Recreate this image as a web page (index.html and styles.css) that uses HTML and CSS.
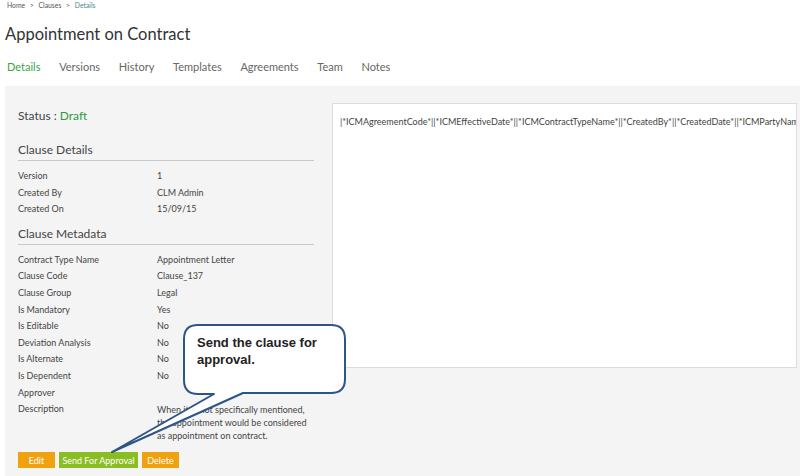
FILE: index.html
```html
<!DOCTYPE html>
<html>
<head>
<meta charset="utf-8">
<link rel="stylesheet" href="styles.css">
</head>
<body>
<div class="page">
  <div class="crumbs">Home <span class="sep">&gt;</span> Clauses <span class="sep">&gt;</span> <span class="cur">Details</span></div>
  <h1 class="title">Appointment on Contract</h1>
  <nav class="tabs">
    <span class="tab active">Details</span>
    <span class="tab">Versions</span>
    <span class="tab">History</span>
    <span class="tab">Templates</span>
    <span class="tab">Agreements</span>
    <span class="tab">Team</span>
    <span class="tab">Notes</span>
  </nav>
  <main class="panel">
    <section class="left">
      <div class="status">Status : <span class="draft">Draft</span></div>
      <h2 class="sect">Clause Details</h2>
      <div class="rows">
        <div class="row"><span class="k">Version</span><span class="v">1</span></div>
        <div class="row"><span class="k">Created By</span><span class="v">CLM Admin</span></div>
        <div class="row"><span class="k">Created On</span><span class="v">15/09/15</span></div>
      </div>
      <h2 class="sect second">Clause Metadata</h2>
      <div class="rows">
        <div class="row"><span class="k">Contract Type Name</span><span class="v">Appointment Letter</span></div>
        <div class="row"><span class="k">Clause Code</span><span class="v">Clause_137</span></div>
        <div class="row"><span class="k">Clause Group</span><span class="v">Legal</span></div>
        <div class="row"><span class="k">Is Mandatory</span><span class="v">Yes</span></div>
        <div class="row"><span class="k">Is Editable</span><span class="v">No</span></div>
        <div class="row"><span class="k">Deviation Analysis</span><span class="v">No</span></div>
        <div class="row"><span class="k">Is Alternate</span><span class="v">No</span></div>
        <div class="row"><span class="k">Is Dependent</span><span class="v">No</span></div>
        <div class="row"><span class="k">Approver</span><span class="v"></span></div>
        <div class="row"><span class="k">Description</span><span class="v desc">When it is not specifically mentioned, the appointment would be considered as appointment on contract.</span></div>
      </div>
      <div class="actions">
        <button class="btn orange">Edit</button>
        <button class="btn green">Send For Approval</button>
        <button class="btn orange">Delete</button>
      </div>
    </section>
    <section class="right">
      <div class="editor">|*ICMAgreementCode*||*ICMEffectiveDate*||*ICMContractTypeName*||*CreatedBy*||*CreatedDate*||*ICMPartyName*|</div>
    </section>
  </main>
  <div class="callout">
    <svg class="bubble" width="165" height="72" viewBox="0 0 165 72">
      <path d="M16 2 H149 Q163 2 163 16 V56 Q163 70 149 70 H61 L-70 129 L32 71 H16 Q2 71 2 57 V16 Q2 2 16 2 Z" fill="#fff" stroke="#2d5686" stroke-width="2" stroke-linejoin="round"/>
    </svg>
    <div class="callout-text">Send the clause for approval.</div>
  </div>
</div>
</body>
</html>
```
FILE: styles.css
```css
html, body { margin: 0; padding: 0; background: #fff; }
body { font-family: Lato, "Open Sans", sans-serif; color: #444; }
.page { position: relative; width: 800px; height: 476px; overflow: hidden; }
.crumbs { font-size: 6.8px; color: #555; padding: 1px 0 0 7px; height: 12px; }
.crumbs .sep { margin: 0 3px; }
.crumbs .cur { color: #4a8a8c; }
.title { font-weight: normal; font-size: 16.5px; line-height: 24px; color: #333; margin: 0; padding: 9px 0 0 5px; height: 30px; }
.tabs { display: flex; padding: 0 0 0 7px; height: 34px; align-items: center; font-size: 11px; box-sizing: border-box; padding-bottom: 6px; }
.tab { color: #666; margin-right: 18.7px; }
.tab.active { color: #3aa63f; }
.panel { background: #f4f4f4; margin-left: 5px; height: 390px; display: flex; }
.left { width: 296px; flex: none; padding: 22px 0 0 13px; font-size: 9px; color: #444; }
.status { font-size: 12px; color: #444; height: 29px; }
.draft { color: #2f9a3f; }
.sect { font-weight: normal; font-size: 12px; color: #444; margin: 0; padding: 5px 0 3px; border-bottom: 1px solid #c8c8c8; }
.sect.second { padding-top: 8px; }
.rows { padding: 7px 0 0; }
.row { display: flex; line-height: 16.6px; }
.k { width: 139px; flex: none; }
.v { flex: 1; }
.v.desc { line-height: 13px; padding-top: 2px; }
.actions { display: flex; gap: 4px; padding-top: 10px; }
.btn { border: none; font-family: inherit; font-size: 9px; color: #fff; height: 16px; padding: 0; }
.btn.orange { background: #efa20e; width: 37px; }
.btn.green { background: #8abd21; width: 79px; }
.right { flex: 1; min-width: 0; padding: 17px 3px 0 18px; }
.editor { background: #fff; border: 1px solid #dcdcdc; height: 265px; font-size: 9px; color: #444; padding: 12px 0 0 7px; white-space: nowrap; overflow: hidden; box-sizing: border-box; }
.callout { position: absolute; left: 182px; top: 323px; width: 165px; height: 72px; }
.bubble { position: absolute; left: 0; top: 0; overflow: visible; }
.callout-text { position: absolute; left: 15px; top: 11px; width: 140px; font-family: "Liberation Sans", Arial, sans-serif; font-weight: bold; font-size: 13px; line-height: 17px; color: #222; }
```
